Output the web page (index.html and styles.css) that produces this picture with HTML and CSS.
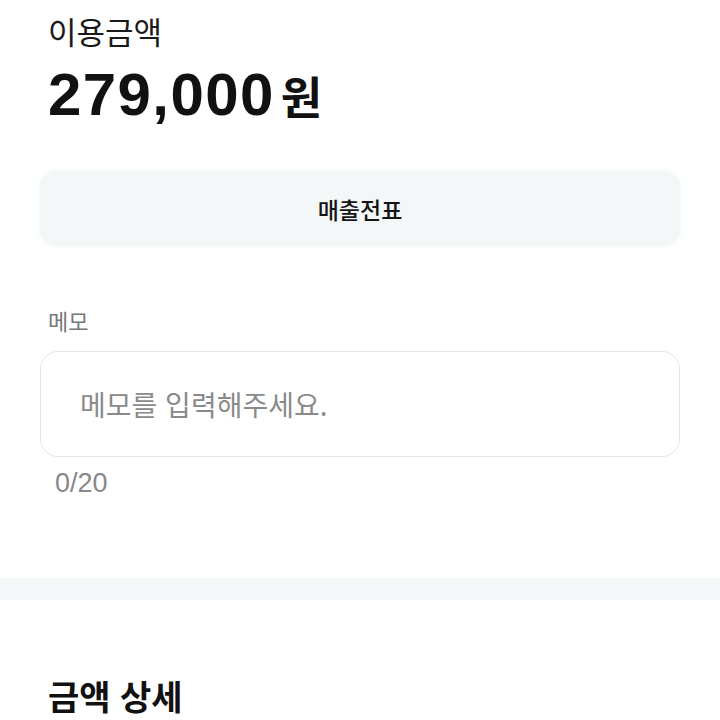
FILE: index.html
```html
<!DOCTYPE html>
<html lang="ko">
  <head>
    <meta charset="UTF-8" />
    <meta name="viewport" content="width=device-width, initial-scale=1.0" />
    <title>결제 상세</title>
    <link rel="stylesheet" href="styles.css">
  </head>
  <body>
    <!-- amount start -->
    <section class="amount">
      <p class="amount-label">이용금액</p>
      <p class="amount-value">279,000<span class="won">원</span></p>
      <button class="receipt-btn" type="button">매출전표</button>
    </section>
    <!-- amount end -->

    <!-- memo start -->
    <section class="memo">
      <label class="memo-label" for="memo">메모</label>
      <div class="memo-box">
        <input id="memo" class="memo-input" type="text" maxlength="20" placeholder="메모를 입력해주세요.">
      </div>
      <p class="memo-count">0/20</p>
    </section>
    <!-- memo end -->

    <div class="divider"></div>

    <section class="detail">
      <h2 class="detail-title">금액 상세</h2>
    </section>
  </body>
</html>
```

FILE: styles.css
```css
*{
    padding: 0;
    margin: 0;
    box-sizing: border-box;
}
body{
    background: #fff;
    color: #111;
    font-family: "Noto Sans CJK KR", "Noto Sans", sans-serif;
    overflow: hidden;
}
.amount{
    padding: 9px 40px 0;
}
.amount-label{
    padding-left: 8px;
    font-size: 31px;
    line-height: 44px;
    color: #1a1a1a;
}
.amount-value{
    padding-left: 8px;
    margin-top: 10px;
    font-family: "Liberation Sans", "Noto Sans CJK KR", sans-serif;
    font-size: 60px;
    font-weight: 700;
    line-height: 64px;
    letter-spacing: 1.4px;
    color: #111;
}
.won{
    font-family: "Noto Sans CJK KR", sans-serif;
    font-size: 45px;
    font-weight: 700;
    margin-left: 6px;
    letter-spacing: 0;
}
.receipt-btn{
    display: block;
    width: 100%;
    height: 75px;
    margin-top: 43px;
    border: none;
    border-radius: 16px;
    background: #f4f7f8;
    box-shadow: 0 0 4px rgba(240, 244, 246, 0.9);
    font-family: "Noto Sans CJK KR", sans-serif;
    font-size: 23px;
    font-weight: 500;
    color: #161616;
}
.memo{
    padding: 58px 40px 0;
}
.memo-label{
    display: block;
    padding-left: 8px;
    font-size: 22px;
    line-height: 32px;
    color: #777;
}
.memo-box{
    margin-top: 15px;
    height: 106px;
    border: 1.5px solid #e4e4e4;
    border-radius: 18px;
    display: flex;
    align-items: center;
    padding: 0 39px;
}
.memo-input{
    width: 100%;
    border: none;
    outline: none;
    background: transparent;
    font-family: "Noto Sans CJK KR", sans-serif;
    font-size: 28px;
    color: #333;
}
.memo-input::placeholder{
    color: #8a8a8a;
}
.memo-count{
    padding-left: 15px;
    margin-top: 8px;
    font-family: "Liberation Sans", sans-serif;
    font-size: 27px;
    line-height: 36px;
    color: #888;
}
.divider{
    margin-top: 77px;
    height: 22px;
    background: #f4f7f8;
}
.detail{
    padding: 74px 40px 0;
}
.detail-title{
    padding-left: 8px;
    font-size: 34px;
    font-weight: 700;
    line-height: 44px;
    color: #111;
}
```
